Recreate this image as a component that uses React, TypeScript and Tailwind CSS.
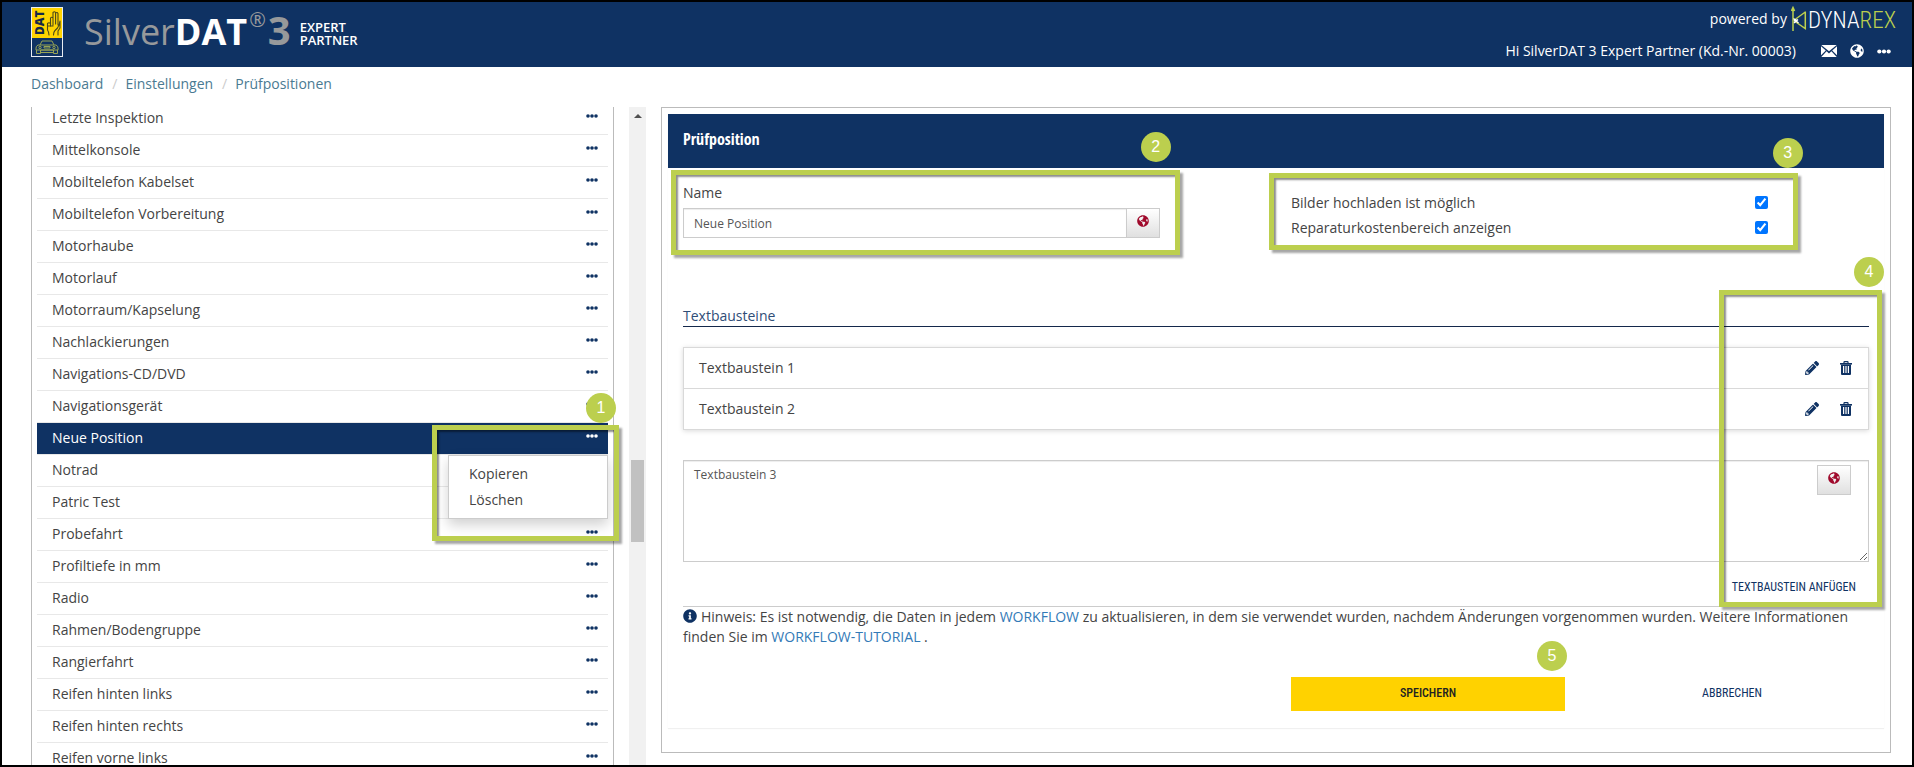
import type { ReactNode } from "react";
import { FaGlobeAmericas, FaInfoCircle, FaPencilAlt } from "react-icons/fa";

const positions = [
  "Letzte Inspektion",
  "Mittelkonsole",
  "Mobiltelefon Kabelset",
  "Mobiltelefon Vorbereitung",
  "Motorhaube",
  "Motorlauf",
  "Motorraum/Kapselung",
  "Nachlackierungen",
  "Navigations-CD/DVD",
  "Navigationsgerät",
  "Neue Position",
  "Notrad",
  "Patric Test",
  "Probefahrt",
  "Profiltiefe in mm",
  "Radio",
  "Rahmen/Bodengruppe",
  "Rangierfahrt",
  "Reifen hinten links",
  "Reifen hinten rechts",
  "Reifen vorne links",
];
const selected = "Neue Position";

function Dots({ className }: { className: string }) {
  return (
    <svg viewBox="0 0 12 4" className={className} fill="currentColor" aria-hidden="true">
      <circle cx="2" cy="2" r="1.8" />
      <circle cx="6" cy="2" r="1.8" />
      <circle cx="10" cy="2" r="1.8" />
    </svg>
  );
}

function Trash() {
  return (
    <svg viewBox="0 0 12 14" className="h-[14px] w-3" aria-hidden="true">
      <path d="M4 2V1.2Q4 .6 4.6 .6H7.4Q8 .6 8 1.2V2" fill="none" stroke="currentColor" strokeWidth="1.2" />
      <path d="M0 2h12v1.6H0z" fill="currentColor" />
      <path
        fillRule="evenodd"
        fill="currentColor"
        d="M1 3.4h10V13q0 1-1 1H2q-1 0-1-1zM3 5v7h1.2V5zM5.4 5v7h1.2V5zM7.8 5v7H9V5z"
      />
    </svg>
  );
}

function Envelope() {
  return (
    <svg viewBox="0 0 16 12" className="h-3 w-4" aria-hidden="true">
      <path fill="currentColor" d="M.3 0h15.400L8 6.300zM0 1.200 4.800 5.500 0 10.300zM16 1.200 11.200 5.500l4.800 4.800zM.3 12l5.300-5.700L8 8.400l2.400-2.100 5.300 5.700z" />
    </svg>
  );
}

function DatLogo() {
  return (
    <svg viewBox="0 0 32 50" className="h-[50px] w-8 shrink-0" role="img" aria-label="DAT">
      <rect width="32" height="50" fill="#e9edf2" />
      <rect x="1" y="1" width="30" height="30" fill="#ffd400" />
      <rect x="1" y="31" width="30" height="18" fill="#0f3263" />
      <text
        transform="translate(13 28) rotate(-90)"
        fontFamily="'Open Sans', sans-serif"
        fontWeight="800"
        fontSize="12"
        fill="#14284b"
      >
        DAT
      </text>
      <g fill="none" stroke="#4b4a1c" strokeWidth="1.1" strokeLinecap="round" strokeLinejoin="round">
        <path d="M18 28q0-3-1.500-5V16.500q1.500-1.500 3 0V19" />
        <path d="M19.500 17V11q1.300-1.500 2.500 0v7M22 11V5.500q1.500-1.500 2.600 0V17M24.600 6q1.500-1.200 2.400.4V18M17 19h5M22.500 28q0-3 1.500-4.500l2.500-2.500Q28.500 18 29 14v7l-2 3v4" />
      </g>
      <g fill="none" stroke="#97a354" strokeWidth="1">
        <path d="M9 38l2-4h10l2 4M7 38h18q2 1 2 3v2H5v-2q0-2 2-3zM5.500 43v3.500h4V43M22.500 43v3.500h4V43M10 43h12M9.500 45.500h13" />
        <circle cx="9" cy="40.500" r="1.200" />
        <circle cx="23" cy="40.500" r="1.200" />
        <path d="M13 39.500h6v1.500h-6z" />
      </g>
    </svg>
  );
}

function DynarexMark() {
  return (
    <svg viewBox="0 0 16 26" className="h-[26px] w-4" aria-hidden="true">
      <g fill="none" stroke="#bccf4e" strokeWidth="1.5">
        <path d="M2 25V2M.4 5 2 1.500l1.600 3.500M14.300 5.500v17L4 15.500M14.300 6 4 13.500" />
      </g>
      <path d="M2.500 12.500l5 4.500M3 17l4-3.500" stroke="#fff" strokeWidth="1.400" />
      <circle cx="4.500" cy="14.500" r="1.600" fill="#fff" />
    </svg>
  );
}

function Frame({ className }: { className: string }) {
  return (
    <div
      className={`pointer-events-none absolute z-20 border-[5px] border-[#bccf4e] shadow-[3px_3px_2px_rgba(0,0,0,0.35),inset_2px_2px_2px_rgba(0,0,0,0.45)] ${className}`}
    />
  );
}

function Badge({ className, children }: { className: string; children: ReactNode }) {
  return (
    <div
      className={`absolute z-30 flex size-[30px] items-center justify-center rounded-full bg-[#bccf4e] font-['Liberation_Sans',sans-serif] text-base text-white ${className}`}
    >
      {children}
    </div>
  );
}

function SnippetRow({ label }: { label: string }) {
  return (
    <li className="flex h-[41px] items-center border-b border-[#d9d9d9] pr-[14px] pl-[15px]">
      <span className="flex-1">{label}</span>
      <div className="flex gap-[18px] text-[#0f3263]">
        <button type="button" aria-label={`${label} bearbeiten`} className="flex w-4 justify-center">
          <FaPencilAlt className="size-[14px]" />
        </button>
        <button type="button" aria-label={`${label} löschen`} className="flex w-4 justify-center">
          <Trash />
        </button>
      </div>
    </li>
  );
}

export default function App() {
  return (
    <div className="flex h-screen flex-col overflow-hidden border-2 border-black bg-white font-['Open_Sans',sans-serif] text-sm text-[#444]">
      <header className="flex h-[65px] shrink-0 items-start justify-between bg-[#0f3263] pr-4 pl-[29px] text-white">
        <div className="flex h-[60px] items-center">
          <DatLogo />
          <div className="flex items-center pl-[21px] leading-none text-[#97999b]">
            <span className="text-[36px]">
              Silver<b className="text-white">DAT</b>
            </span>
            <span className="self-start pl-[2px] text-[20px]">®</span>
            <b className="pb-1 pl-[2px] text-[40px]">3</b>
          </div>
          <div className="pt-1 pl-[9px] text-[13px] leading-[13px] font-semibold">
            EXPERT
            <br />
            PARTNER
          </div>
        </div>
        <div className="flex flex-col items-end">
          <div className="flex h-[34px] items-center font-medium">
            <span>powered by</span>
            <a href="#dynarex" aria-label="Dynarex" className="flex items-center pl-1">
              <DynarexMark />
              <span className="pt-1 pl-px font-['Roboto_Condensed','Open_Sans_Condensed',sans-serif] text-[23px] leading-[30px] font-light">
                DYNA<span className="text-[#bccf4e]">REX</span>
              </span>
            </a>
          </div>
          <div className="flex h-[30px] items-center pr-[5px]">
            <span className="pr-[25px] font-medium">Hi SilverDAT 3 Expert Partner (Kd.-Nr. 00003)</span>
            <div className="flex items-center gap-[13px]">
              <button type="button" aria-label="Nachrichten">
                <Envelope />
              </button>
              <button type="button" aria-label="Sprache">
                <FaGlobeAmericas className="size-[14px]" />
              </button>
              <button type="button" aria-label="Mehr">
                <Dots className="h-[5px] w-[14px]" />
              </button>
            </div>
          </div>
        </div>
      </header>

      <nav aria-label="Breadcrumb" className="h-10 shrink-0 px-[29px] pt-[7px] leading-5 text-[#4a7a92]">
        <a href="#dashboard">Dashboard</a>
        <span className="pr-2 pl-[9px] text-[#ccc]">/</span>
        <a href="#einstellungen">Einstellungen</a>
        <span className="pr-2 pl-[9px] text-[#ccc]">/</span>
        <a href="#pruefpositionen">Prüfpositionen</a>
      </nav>

      <main className="grid min-h-0 flex-1 grid-cols-[1fr_2fr] gap-[15px] pr-[21px] pl-[29px]">
        <div className="grid min-h-0 grid-cols-[1fr_17px] gap-[15px] overflow-hidden">
          <ul className="border-x border-[#bbb] px-[5px]">
            {positions.map((name) => {
              const active = name === selected;
              return (
                <li
                  key={name}
                  className={`relative flex h-8 items-center border-b border-[#e8e8e8] pr-[10px] pl-[15px] first:-mt-1 ${
                    active ? "bg-[#0f3263] bg-clip-padding font-medium text-white" : ""
                  }`}
                >
                  <a href="#position" className="flex-1 pb-[2px]">
                    {name}
                  </a>
                  <button
                    type="button"
                    aria-label={`Menü ${name}`}
                    className={`flex items-center pb-[5px] ${active ? "text-white" : "text-[#0f3263]"}`}
                  >
                    <Dots className="h-1 w-3" />
                  </button>
                  {active && (
                    <>
                      <div
                        role="menu"
                        className="absolute top-8 right-0 z-10 flex w-40 flex-col items-start border border-[#ccc] bg-white px-5 py-[5px] text-sm leading-[26px] font-normal text-[#444] shadow-[0_6px_12px_rgba(0,0,0,0.18)]"
                      >
                        <button type="button" role="menuitem">
                          Kopieren
                        </button>
                        <button type="button" role="menuitem">
                          Löschen
                        </button>
                      </div>
                      <Frame className="top-[2px] right-[-11px] h-[116px] w-[187px]" />
                      <Badge className="top-[-30px] right-[-8px]">1</Badge>
                    </>
                  )}
                </li>
              );
            })}
          </ul>
          <div aria-hidden="true" className="flex flex-col items-center bg-[#f1f1f1] pt-[7px]">
            <svg viewBox="0 0 8 4" className="h-1 w-2" fill="#505050">
              <path d="M4 0l4 4H0z" />
            </svg>
            <div className="mt-[342px] h-[82px] w-[13px] bg-[#c1c1c1]" />
          </div>
        </div>

        <section className="self-start border border-[#bbb] px-[6px] pt-[6px] pb-6">
          <form className="pb-[17px] shadow-[0_1px_1px_rgba(0,0,0,0.06)]">
            <h1 className="h-[54px] bg-[#0f3263] px-[15px] pt-[13px] font-['Open_Sans_Condensed','Roboto_Condensed',sans-serif] text-base leading-6 font-bold text-white">
              Prüfposition
            </h1>

            <div className="grid grid-cols-12 pt-[15px]">
              <div className="col-span-5 px-[15px]">
                <div className="relative">
                  <label htmlFor="name" className="block leading-5">
                    Name
                  </label>
                  <div className="mt-[5px] flex h-[30px]">
                    <input
                      id="name"
                      defaultValue="Neue Position"
                      className="min-w-0 flex-1 border border-[#ccc] px-[10px] pt-px text-xs text-[#555] shadow-[inset_0_1px_1px_rgba(0,0,0,0.075)] outline-none"
                    />
                    <button
                      type="button"
                      aria-label="Name übersetzen"
                      className="flex w-[33px] justify-center border border-l-0 border-[#ccc] bg-linear-to-b from-white to-[#e0e0e0] pt-[6px] text-[#a00a2c]"
                    >
                      <FaGlobeAmericas className="size-3" />
                    </button>
                  </div>
                  <Frame className="top-[-13px] right-[-20px] bottom-[-17px] left-[-12px]" />
                  <Badge className="top-[-51px] right-[-11px]">2</Badge>
                </div>
              </div>
              <div className="col-span-5 col-start-7 px-[15px] pt-[7px]">
                <div className="relative leading-[25px]">
                  <label className="flex items-center justify-between">
                    Bilder hochladen ist möglich
                    <input type="checkbox" defaultChecked className="size-[13px]" />
                  </label>
                  <label className="flex items-center justify-between">
                    Reparaturkostenbereich anzeigen
                    <input type="checkbox" defaultChecked className="size-[13px]" />
                  </label>
                  <Frame className="top-[-17px] right-[-30px] bottom-[-10px] left-[-22px]" />
                  <Badge className="top-[-52px] right-[-35px]">3</Badge>
                </div>
              </div>
            </div>

            <div className="px-[15px] pt-[66px]">
              <div className="relative">
                <h2 className="border-b border-[#14284b] leading-5 text-[#2f4d77]">Textbausteine</h2>
                <ul className="mt-5 border border-b-0 border-[#d9d9d9] shadow-[0_1px_5px_rgba(0,0,0,0.15)]">
                  <SnippetRow label="Textbaustein 1" />
                  <SnippetRow label="Textbaustein 2" />
                </ul>
                <div className="relative mt-[30px]">
                  <textarea
                    aria-label="Neuer Textbaustein"
                    defaultValue="Textbaustein 3"
                    className="block h-[102px] w-full border border-[#ccc] px-[10px] py-[5px] text-xs leading-[17px] text-[#555] shadow-[inset_0_1px_1px_rgba(0,0,0,0.075)] outline-none"
                  />
                  <button
                    type="button"
                    aria-label="Textbaustein übersetzen"
                    className="absolute top-[5px] right-[18px] flex h-[30px] w-[34px] justify-center border border-[#ccc] bg-linear-to-b from-white to-[#e0e0e0] pt-[6px] text-[#a00a2c]"
                  >
                    <FaGlobeAmericas className="size-3" />
                  </button>
                </div>
                <div className="flex h-[45px] items-center justify-end border-b border-[#ccc] pt-[6px] pr-[13px]">
                  <button
                    type="button"
                    className="font-['Roboto_Condensed','Open_Sans_Condensed',sans-serif] text-xs text-[#0f3263]"
                  >
                    TEXTBAUSTEIN ANFÜGEN
                  </button>
                </div>
                <Frame className="top-[-16px] right-[-13px] bottom-0 w-[163px]" />
                <Badge className="top-[-49px] right-[-15px]">4</Badge>
              </div>
              <p className="leading-5">
                <FaInfoCircle className="mr-1 mb-1 inline size-[14px] text-[#0f3263]" />
                Hinweis: Es ist notwendig, die Daten in jedem{" "}
                <a href="#workflow" className="text-[#337ab7]">
                  WORKFLOW
                </a>{" "}
                zu aktualisieren, in dem sie verwendet wurden, nachdem Änderungen vorgenommen wurden. Weitere
                Informationen finden Sie im{" "}
                <a href="#tutorial" className="text-[#337ab7]">
                  WORKFLOW-TUTORIAL
                </a>{" "}
                .
              </p>
            </div>

            <div className="grid grid-cols-12 pt-[30px] font-['Roboto_Condensed','Open_Sans_Condensed',sans-serif] text-xs">
              <div className="col-span-3 col-start-7 px-[15px]">
                <div className="relative">
                  <button type="submit" className="h-[34px] w-full bg-[#ffd200] pb-[2px] font-medium text-[#222]">
                    SPEICHERN
                  </button>
                  <Badge className="top-[-36px] right-[-2px]">5</Badge>
                </div>
              </div>
              <div className="col-span-3 px-[15px]">
                <button type="button" className="h-[34px] w-full pb-[2px] text-[#0f3263]">
                  ABBRECHEN
                </button>
              </div>
            </div>
          </form>
        </section>
      </main>
    </div>
  );
}
